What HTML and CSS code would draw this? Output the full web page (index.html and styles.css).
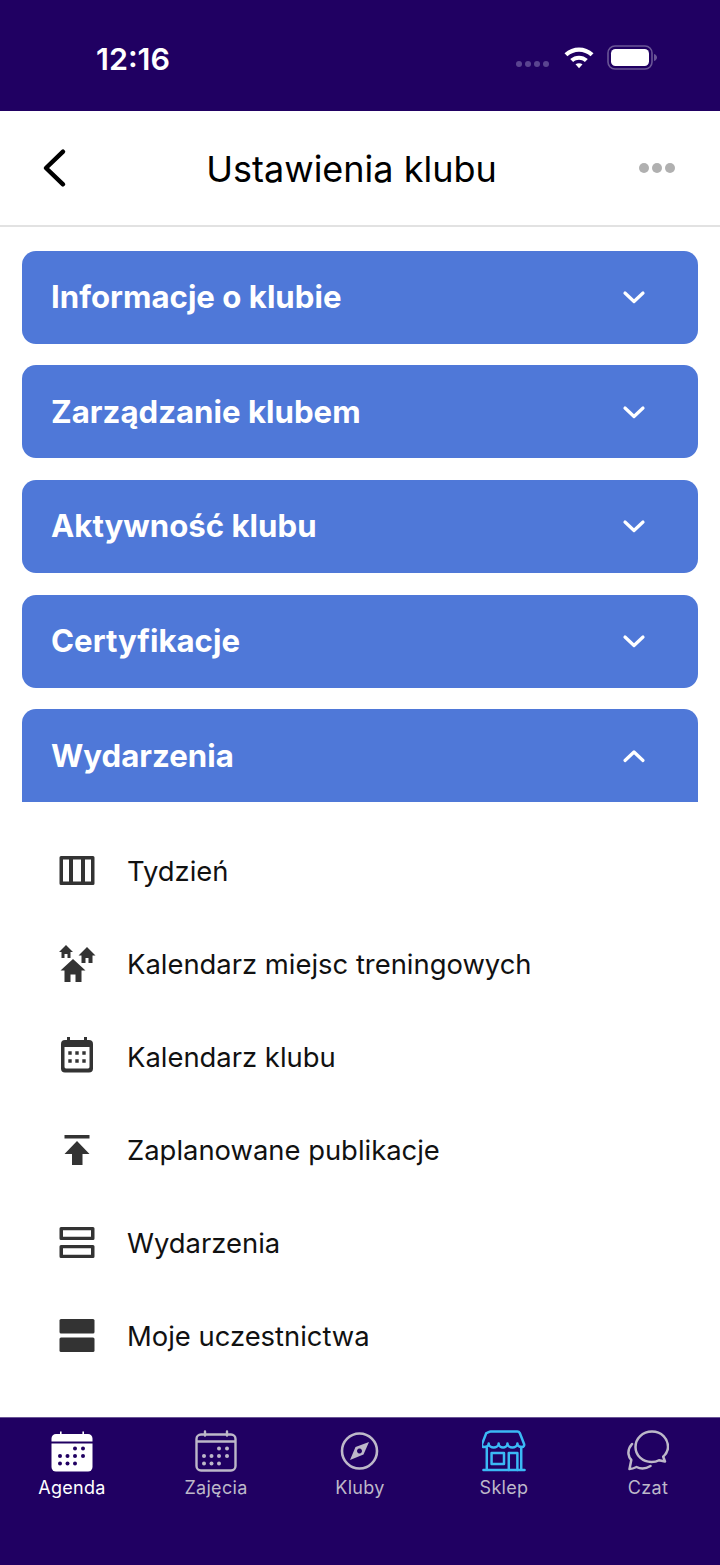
FILE: index.html
```html
<!DOCTYPE html>
<html lang="pl">
<head>
  <meta charset="UTF-8">
  <meta name="viewport" content="width=device-width, initial-scale=1.0">
  <title>Ustawienia klubu</title>
  <link rel="stylesheet" href="styles.css">
</head>
<body>
  <div class="screen">
    <div class="status-bar">
      <span class="clock">12:16</span>
      <div class="status-icons">
        <div class="signal"><i></i><i></i><i></i><i></i></div>
        <svg class="wifi" width="32" height="24" viewBox="0 0 32 24">
          <path d="M1.5 8.200C9.700 .6 22.300 .6 30.500 8.200l-2.900 3C21 5.200 11 5.200 4.400 11.200z" fill="#fff"/>
          <path d="M7.200 14C12.200 9.500 19.800 9.500 24.800 14l-2.900 3C18.500 14.100 13.500 14.100 10.100 17z" fill="#fff"/>
          <path d="M12.500 19.300c2.100-1.500 4.900-1.500 7 0L16 23.200z" fill="#fff"/>
        </svg>
        <svg class="battery" width="50" height="25" viewBox="0 0 50 25">
          <rect x="1" y="1" width="44" height="23" rx="7" fill="none" stroke="#6a5596" stroke-width="1.600"/>
          <rect x="4" y="4" width="38" height="17" rx="4.500" fill="#fff"/>
          <path d="M47 9c2 .6 3 2 3 3.500s-1 2.900-3 3.500z" fill="#6a5596"/>
        </svg>
      </div>
    </div>

    <header class="top-bar">
      <svg class="back" width="28" height="42" viewBox="0 0 28 42">
        <path d="M23 4.700 6 21l17 16.300" fill="none" stroke="#000" stroke-width="4.500" stroke-linecap="round" stroke-linejoin="round"/>
      </svg>
      <h1>Ustawienia klubu</h1>
      <div class="more"><i></i><i></i><i></i></div>
    </header>

    <main class="content">
      <div class="section">
        <span>Informacje o klubie</span>
        <svg class="chevron" width="24" height="14" viewBox="0 0 24 14"><path d="M3 3l9 8.500L21 3"/></svg>
      </div>
      <div class="section">
        <span>Zarządzanie klubem</span>
        <svg class="chevron" width="24" height="14" viewBox="0 0 24 14"><path d="M3 3l9 8.500L21 3"/></svg>
      </div>
      <div class="section">
        <span>Aktywność klubu</span>
        <svg class="chevron" width="24" height="14" viewBox="0 0 24 14"><path d="M3 3l9 8.500L21 3"/></svg>
      </div>
      <div class="section">
        <span>Certyfikacje</span>
        <svg class="chevron" width="24" height="14" viewBox="0 0 24 14"><path d="M3 3l9 8.500L21 3"/></svg>
      </div>
      <div class="section section-open">
        <span>Wydarzenia</span>
        <svg class="chevron" width="24" height="14" viewBox="0 0 24 14"><path d="M3 11.500 12 3l9 8.500"/></svg>
      </div>

      <ul class="menu">
        <li>
          <svg width="36" height="30" viewBox="0 0 36 30">
            <path fill-rule="evenodd" d="M2 0h32a1.500 1.500 0 0 1 1.500 1.500v26A1.500 1.500 0 0 1 34 29H2a1.500 1.500 0 0 1-1.500-1.500v-26A1.500 1.500 0 0 1 2 0zm2 3.500v22h6v-22zm10 0v22h8v-22zm12 0v22h6v-22z" fill="#333"/>
          </svg>
          <span>Tydzień</span>
        </li>
        <li>
          <svg width="40" height="38" viewBox="0 0 40 38">
            <path d="M9 0l7 7h-2.500v6h-3V9h-3v4h-3V7H2z" fill="#333"/>
            <path d="M30 2l8.500 8.500h-3V18h-4v-5h-3v5h-4v-7.500h-3z" fill="#333"/>
            <path d="M16 14l12.500 11.500h-4V37h-6v-7.500h-5V37h-6V25.500h-4z" fill="#333"/>
          </svg>
          <span>Kalendarz miejsc treningowych</span>
        </li>
        <li>
          <svg width="32" height="39" viewBox="0 0 32 39">
            <path fill-rule="evenodd" d="M6 0h3v3h14V0h3v3h2a4 4 0 0 1 4 4v24.500a4 4 0 0 1-4 4H4a4 4 0 0 1-4-4V7a4 4 0 0 1 4-4h2zM3.500 10v19.500c0 1 .5 2 1.500 2h22c1 0 1.500-1 1.500-2V10z" fill="#333"/>
            <path d="M7.300 14.300h3.400v3.400H7.300zM14.300 14.300h3.400v3.400h-3.400zM21.300 14.300h3.400v3.400h-3.400zM7.300 22.300h3.400v3.400H7.300zM14.300 22.300h3.400v3.400h-3.400zM21.300 22.300h3.400v3.400h-3.400z" fill="#333"/>
          </svg>
          <span>Kalendarz klubu</span>
        </li>
        <li>
          <svg width="26" height="30" viewBox="0 0 26 30">
            <path d="M.5 0h25v3.500H.5zM13 6 25.500 19H18.500v11H8V19H.5z" fill="#333"/>
          </svg>
          <span>Zaplanowane publikacje</span>
        </li>
        <li>
          <svg width="36" height="31" viewBox="0 0 36 31">
            <path fill-rule="evenodd" d="M2 0h32a1.500 1.500 0 0 1 1.500 1.500v10A1.500 1.500 0 0 1 34 13H2a1.500 1.500 0 0 1-1.500-1.500v-10A1.500 1.500 0 0 1 2 0zm2 3.200v6.600h28V3.200zM2 18h32a1.500 1.500 0 0 1 1.500 1.500v10A1.500 1.500 0 0 1 34 31H2a1.500 1.500 0 0 1-1.500-1.500v-10A1.500 1.500 0 0 1 2 18zm2 3.200v6.600h28v-6.600z" fill="#333"/>
          </svg>
          <span>Wydarzenia</span>
        </li>
        <li>
          <svg width="36" height="33" viewBox="0 0 36 33">
            <rect x=".5" width="35" height="14.500" rx="1.500" fill="#333"/>
            <rect x=".5" y="18.500" width="35" height="14.500" rx="1.500" fill="#333"/>
          </svg>
          <span>Moje uczestnictwa</span>
        </li>
      </ul>
    </main>

    <nav class="tab-bar">
      <div class="tab tab-active">
        <svg width="42" height="42" viewBox="0 0 42 42">
          <path d="M9 1.500h1.600v2.500h20.800V1.500H33V4h4a4.500 4.500 0 0 1 4.500 4.500v3H.5v-3A4.500 4.500 0 0 1 5 4h4z" fill="#fff"/>
          <path d="M.5 13.500h41V37a4.500 4.500 0 0 1-4.500 4.500H5A4.500 4.500 0 0 1 .5 37z" fill="#fff"/>
          <g fill="#200062">
            <circle cx="24" cy="18.500" r="2"/><circle cx="32" cy="18.500" r="2"/>
            <circle cx="9" cy="26" r="2"/><circle cx="16.500" cy="26" r="2"/><circle cx="24" cy="26" r="2"/><circle cx="32" cy="26" r="2"/>
            <circle cx="9" cy="33.500" r="2"/><circle cx="16.500" cy="33.500" r="2"/><circle cx="24" cy="33.500" r="2"/>
          </g>
        </svg>
        <span>Agenda</span>
      </div>
      <div class="tab">
        <svg width="42" height="42" viewBox="0 0 42 42">
          <rect x="1.500" y="4.500" width="39" height="36" rx="4.500" fill="none" stroke="#bdb8c9" stroke-width="2.400"/>
          <path d="M1.500 11.500h39" stroke="#bdb8c9" stroke-width="2.400"/>
          <path d="M10 1.500v4M32 1.500v4" stroke="#bdb8c9" stroke-width="2.400" stroke-linecap="round"/>
          <g fill="#bdb8c9">
            <circle cx="24" cy="18.500" r="2"/><circle cx="32" cy="18.500" r="2"/>
            <circle cx="9" cy="26" r="2"/><circle cx="16.500" cy="26" r="2"/><circle cx="24" cy="26" r="2"/><circle cx="32" cy="26" r="2"/>
            <circle cx="9" cy="33.500" r="2"/><circle cx="16.500" cy="33.500" r="2"/><circle cx="24" cy="33.500" r="2"/>
          </g>
        </svg>
        <span>Zajęcia</span>
      </div>
      <div class="tab">
        <svg width="42" height="42" viewBox="0 0 42 42">
          <circle cx="20.500" cy="21" r="17.500" fill="none" stroke="#bdb8c9" stroke-width="2.600"/>
          <path d="M30 12 24.500 24.500 11 30l5.500-13zM20.500 18.500a2.500 2.500 0 1 0 .01 0z" fill="#bdb8c9" fill-rule="evenodd"/>
        </svg>
        <span>Kluby</span>
      </div>
      <div class="tab">
        <svg width="44" height="42" viewBox="0 0 46 42" preserveAspectRatio="none">
          <g fill="none" stroke="#3bb9f5" stroke-width="2.600" stroke-linecap="round" stroke-linejoin="round">
            <path d="M9 1.500h28c1 0 2 .6 2.500 1.600l4.500 11c.5 1.300-.5 2.900-2 2.900-2.500 0-5-.8-5-3.500 0 2.700-3 4-5.200 4s-5.200-1.300-5.200-4c0 2.700-2.800 4-4.600 4s-4.600-1.300-4.600-4c0 2.700-3 4-5.200 4s-5.200-1.300-5.200-4c0 2.700-2.500 3.500-5 3.500-1.500 0-2.500-1.600-2-2.900l4.500-11C7 2.100 8 1.500 9 1.500z"/>
            <path d="M5 18v22M41 18v22M1.500 40h43"/>
            <rect x="10" y="23" width="13" height="11"/>
            <path d="M28 40V23h9v17"/>
          </g>
        </svg>
        <span>Sklep</span>
      </div>
      <div class="tab">
        <svg width="42" height="42" viewBox="0 0 42 42">
          <g fill="none" stroke="#bdb8c9" stroke-width="2.500" stroke-linecap="round" stroke-linejoin="round">
            <path d="M25 1.500C15.500 1.500 8.500 8.500 8.500 17S15.500 32 24.500 32c3 0 5.500-.6 7.500-1.800l6 1.300-1.800-4.800C39 24 41 21 41 17 41 8.500 34.500 1.500 25 1.500z"/>
            <path d="M5 14c-2.600 3-4 6-3.500 10 .3 2.500 1.300 4.500 2.800 6L2.500 39c3 0 5-1 7-2 3.500 1.700 9 2 14-1"/>
          </g>
        </svg>
        <span>Czat</span>
      </div>
    </nav>
  </div>
</body>
</html>
```

FILE: styles.css
```css
html, body {
  margin: 0;
  padding: 0;
}

body {
  font-family: Inter, "Liberation Sans", sans-serif;
  background-color: #fff;
}

.screen {
  width: 720px;
  height: 1565px;
  display: flex;
  flex-direction: column;
  overflow: hidden;
}

.status-bar {
  height: 111px;
  flex-shrink: 0;
  box-sizing: border-box;
  padding: 38px 63px 0 96px;
  display: flex;
  justify-content: space-between;
  align-items: flex-start;
  background-color: #200062;
  color: #fff;
}

.clock {
  font-size: 30.500px;
  line-height: 42px;
  font-weight: 600;
}

.status-icons {
  display: flex;
  align-items: center;
  height: 38px;
}

.signal {
  display: flex;
  gap: 2.500px;
  margin-top: 14px;
  margin-right: 14px;
}

.signal i {
  width: 6.500px;
  height: 6.500px;
  border-radius: 50%;
  background-color: #5a4490;
}

.wifi {
  margin-right: 12px;
}

.top-bar {
  height: 116px;
  flex-shrink: 0;
  box-sizing: border-box;
  padding: 0 45.500px 0 40px;
  display: flex;
  align-items: center;
  justify-content: space-between;
  background-color: #fff;
  border-bottom: 2px solid #e2e2e2;
}

.top-bar h1 {
  margin: 2px 3.500px 0 0;
  font-size: 36px;
  font-weight: 400;
  color: #000;
}

.more {
  display: flex;
  gap: 3px;
}

.more i {
  width: 10px;
  height: 10px;
  border-radius: 50%;
  background-color: #b0b0b0;
}

.content {
  flex: 1;
  padding: 23.800px 22px 0;
}

.section {
  height: 93px;
  box-sizing: border-box;
  margin-bottom: 21.600px;
  padding: 0 52px 0 29px;
  display: flex;
  align-items: center;
  justify-content: space-between;
  background-color: #4f78d8;
  border-radius: 14px;
  color: #fff;
  font-size: 31.200px;
  font-weight: 700;
}

.section-open {
  margin-bottom: 0;
  border-radius: 14px 14px 0 0;
}

.chevron path {
  fill: none;
  stroke: #fff;
  stroke-width: 3.200;
  stroke-linecap: round;
  stroke-linejoin: round;
}

.menu {
  list-style: none;
  margin: 22px 0 0;
  padding: 0;
}

.menu li {
  height: 93px;
  padding-left: 33px;
  display: grid;
  grid-template-columns: 44px 1fr;
  column-gap: 28px;
  align-items: center;
  font-size: 27.400px;
  color: #111;
}

.menu li svg {
  justify-self: center;
}

.tab-bar {
  height: 148px;
  flex-shrink: 0;
  box-sizing: border-box;
  padding-top: 12px;
  display: grid;
  grid-template-columns: repeat(5, 144px);
  background-color: #200062;
  border-top: 1px solid #6a5596;
}

.tab {
  display: flex;
  flex-direction: column;
  align-items: center;
  gap: 4px;
  font-size: 18px;
  line-height: 24px;
  color: #bdb8c9;
  letter-spacing: .3px;
}

.tab-active {
  color: #fff;
}
```
